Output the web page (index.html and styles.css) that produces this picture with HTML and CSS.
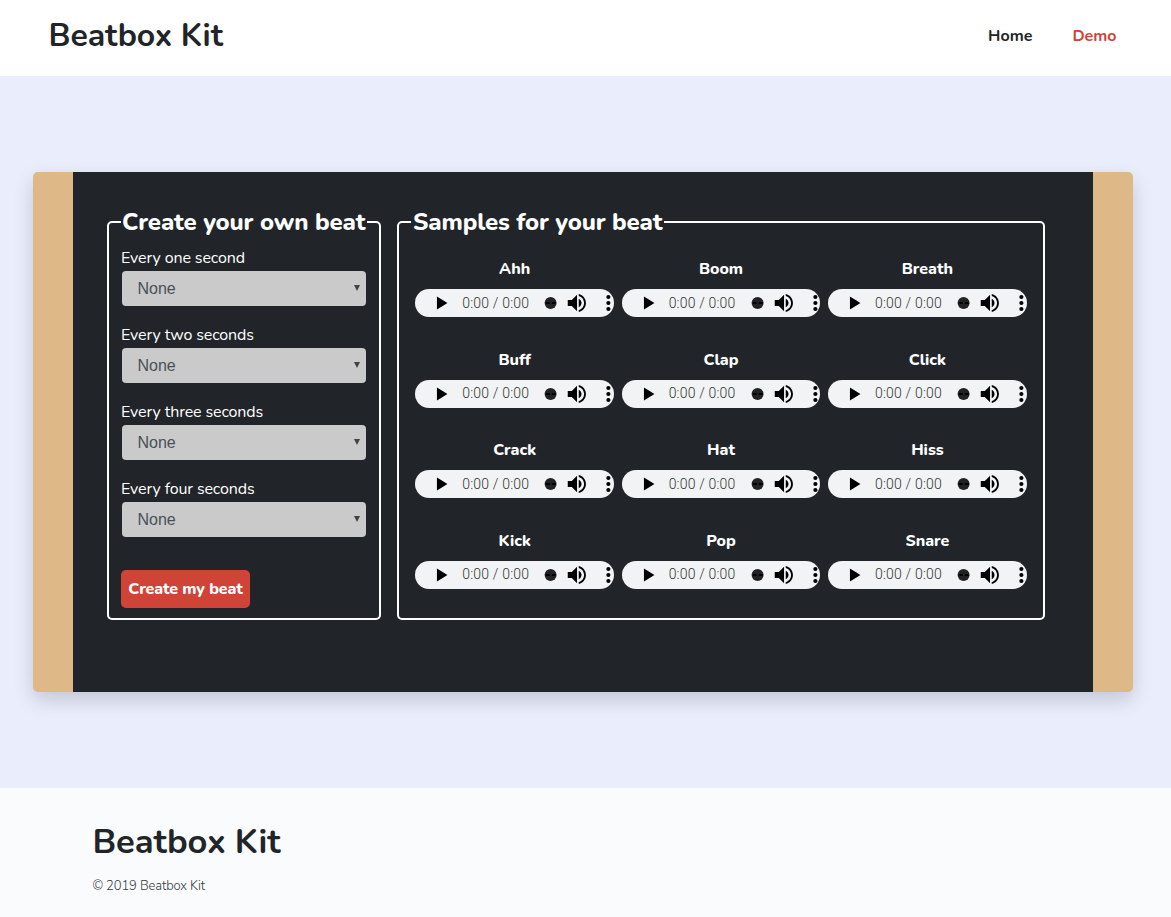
FILE: index.html
```
<!DOCTYPE html>
<html lang="en">
<head>
<meta charset="utf-8">
<title>Beatbox Kit</title>
<link rel="stylesheet" href="styles.css">
</head>
<body>
<svg width="0" height="0" class="defs" aria-hidden="true">
  <symbol id="controls" viewBox="0 0 199 28">
    <path d="M22 7.500v13l10.500-6.500z"/>
    <circle cx="135.800" cy="14" r="6" fill="#222"/>
    <path d="M131 13h4v2h-4zM137 13h4v2h-4z"/>
    <path d="M153 11v6h4l5.300 5.300V5.700L157 11zM164 9.700v8.600c1.700-.8 2.800-2.400 2.800-4.300s-1.100-3.500-2.800-4.300zM164 5v1.900c3.200.9 5.300 3.700 5.300 7.100s-2.100 6.200-5.300 7.100V23c4.200-.9 7.200-4.600 7.200-9s-3-8.100-7.200-9z"/>
    <circle cx="193.700" cy="8" r="2.100"/><circle cx="193.700" cy="14" r="2.100"/><circle cx="193.700" cy="20" r="2.100"/>
  </symbol>
</svg>
<header class="header">
  <h1 class="brand">Beatbox Kit</h1>
  <nav class="nav"><a class="link">Home</a><a class="link active">Demo</a></nav>
</header>
<main class="main">
  <section class="board">
    <fieldset class="box creator">
      <legend class="legend">Create your own beat</legend>
      <div class="field"><label class="label">Every one second</label><div class="select">None<svg class="arrow" viewBox="0 0 6 6"><path d="M0 0h6L3 6z"/></svg></div></div>
      <div class="field"><label class="label">Every two seconds</label><div class="select">None<svg class="arrow" viewBox="0 0 6 6"><path d="M0 0h6L3 6z"/></svg></div></div>
      <div class="field"><label class="label">Every three seconds</label><div class="select">None<svg class="arrow" viewBox="0 0 6 6"><path d="M0 0h6L3 6z"/></svg></div></div>
      <div class="field"><label class="label">Every four seconds</label><div class="select">None<svg class="arrow" viewBox="0 0 6 6"><path d="M0 0h6L3 6z"/></svg></div></div>
      <button class="button">Create my beat</button>
    </fieldset>
    <fieldset class="box samples">
      <legend class="legend">Samples for your beat</legend>
      <div class="grid">
        <div class="sample"><b class="name">Ahh</b><div class="audio"><svg class="controls"><use href="#controls"/></svg><span class="time">0:00 / 0:00</span></div></div>
        <div class="sample"><b class="name">Boom</b><div class="audio"><svg class="controls"><use href="#controls"/></svg><span class="time">0:00 / 0:00</span></div></div>
        <div class="sample"><b class="name">Breath</b><div class="audio"><svg class="controls"><use href="#controls"/></svg><span class="time">0:00 / 0:00</span></div></div>
        <div class="sample"><b class="name">Buff</b><div class="audio"><svg class="controls"><use href="#controls"/></svg><span class="time">0:00 / 0:00</span></div></div>
        <div class="sample"><b class="name">Clap</b><div class="audio"><svg class="controls"><use href="#controls"/></svg><span class="time">0:00 / 0:00</span></div></div>
        <div class="sample"><b class="name">Click</b><div class="audio"><svg class="controls"><use href="#controls"/></svg><span class="time">0:00 / 0:00</span></div></div>
        <div class="sample"><b class="name">Crack</b><div class="audio"><svg class="controls"><use href="#controls"/></svg><span class="time">0:00 / 0:00</span></div></div>
        <div class="sample"><b class="name">Hat</b><div class="audio"><svg class="controls"><use href="#controls"/></svg><span class="time">0:00 / 0:00</span></div></div>
        <div class="sample"><b class="name">Hiss</b><div class="audio"><svg class="controls"><use href="#controls"/></svg><span class="time">0:00 / 0:00</span></div></div>
        <div class="sample"><b class="name">Kick</b><div class="audio"><svg class="controls"><use href="#controls"/></svg><span class="time">0:00 / 0:00</span></div></div>
        <div class="sample"><b class="name">Pop</b><div class="audio"><svg class="controls"><use href="#controls"/></svg><span class="time">0:00 / 0:00</span></div></div>
        <div class="sample"><b class="name">Snare</b><div class="audio"><svg class="controls"><use href="#controls"/></svg><span class="time">0:00 / 0:00</span></div></div>
      </div>
    </fieldset>
  </section>
</main>
<footer class="footer">
  <h2 class="footer-brand">Beatbox Kit</h2>
  <p class="copyright">© 2019 Beatbox Kit</p>
</footer>
</body>
</html>
```

FILE: styles.css
```
* { box-sizing: border-box; }
body { margin: 0; height: 917px; overflow: hidden; display: flex; flex-direction: column; font-family: Nunito, Lato, sans-serif; font-size: 16px; line-height: 24px; color: #212529; background: #fafbfd; }
.defs { position: absolute; }
.header { height: 76px; flex: none; display: flex; justify-content: space-between; padding: 12px 54.500px 0 48.500px; background: #fff; }
.brand { margin: 0; font-size: 32px; line-height: 48px; font-weight: 750; white-space: nowrap; letter-spacing: -.1px; }
.nav { display: flex; gap: 40px; padding-top: 12px; font-weight: 700; }
.active { color: #d04437; }
.main { height: 712px; flex: none; padding: 96px 38px 0 33px; background: #e9edfc; }
.board { width: 1100px; height: 520px; display: flex; align-items: flex-start; gap: 16px; padding: 32px 34px 0; background: #212529; border: solid #deb887; border-width: 0 40px; border-radius: 5px; box-shadow: 0 8px 20px rgba(0,0,0,.16); color: #fff; }
.box { margin: 0; min-width: 0; height: 416px; border: 2px solid #fff; border-radius: 5px; }
.creator { width: 274px; padding: 5px 12px 0; }
.samples { width: 648px; padding: 16.500px 16px 0; }
.legend { height: 36px; padding: 0 2px 0 1px; font-size: 24px; line-height: 36px; font-weight: 800; letter-spacing: -.13px; white-space: nowrap; }
.samples .legend { margin-left: -4px; padding-left: 2px; }
.field { height: 77px; }
.label { display: block; height: 26px; line-height: 26px; letter-spacing: -.12px; }
.select { display: flex; align-items: center; justify-content: space-between; width: 244px; height: 35px; margin-left: 1px; padding: 0 6px 0 15.500px; border-radius: 4px; background: #cacaca; color: #495057; font-family: "Liberation Sans", Arial, sans-serif; }
.arrow { width: 6px; height: 6px; margin-top: -1px; fill: #404346; }
.button { display: block; width: 129px; height: 38px; margin-top: 17px; padding: 0; border: 0; border-radius: 5px; background: #d04437; color: #fff; font: 800 16px/38px Nunito, Lato, sans-serif; letter-spacing: -.1px; }
.grid { display: grid; grid-template-columns: repeat(3, 198.700px); grid-auto-rows: 90.500px; column-gap: 7.700px; margin-left: .3px; }
.name { display: block; height: 32.500px; padding-top: .6px; text-align: center; font-weight: 800; }
.audio { height: 28px; border-radius: 14px; background: #f1f3f4; display: grid; }
.controls { grid-area: 1 / 1; width: 198.700px; height: 28px; }
.time { grid-area: 1 / 1; margin-top: -.2px; padding-left: 47px; font: 300 14px/28px Roboto, sans-serif; letter-spacing: .18px; color: #333; }
.footer { flex: 1; padding: 27px 92.500px 0; background: #fafbfd; }
.footer-brand { margin: 0; font-size: 34.500px; line-height: 54px; font-weight: 750; letter-spacing: -.12px; }
.copyright { margin: 5px 0 0; font-size: 13px; line-height: 24px; font-weight: 300; letter-spacing: -.13px; color: #343a40; }
```
